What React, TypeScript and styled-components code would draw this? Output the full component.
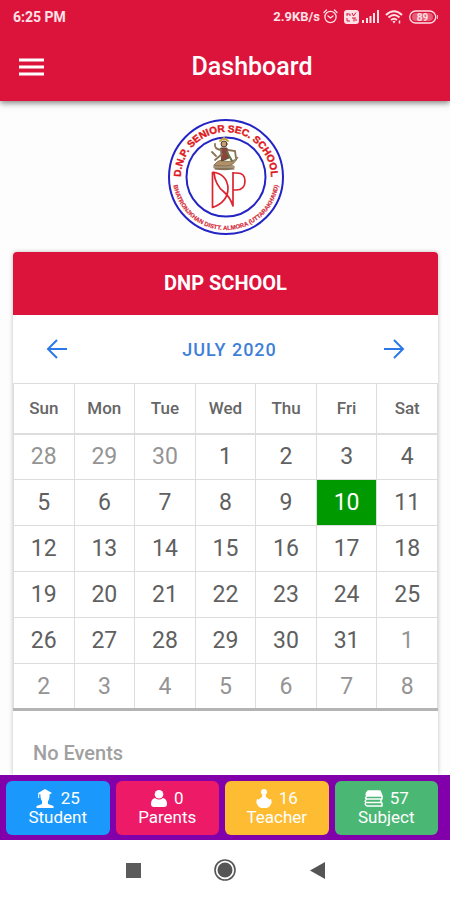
import React from "react";
import styled, { createGlobalStyle } from "styled-components";

const crimson = "#dc143c";

const GlobalStyle = createGlobalStyle`
  * { box-sizing: border-box; }
  body {
    margin: 0;
    background: #fdfdfd;
    font-family: Roboto, "Liberation Sans", sans-serif;
  }
  button { font-family: inherit; border: 0; padding: 0; cursor: pointer; }
`;

const Screen = styled.div`
  display: flex;
  flex-direction: column;
  min-height: 100vh;
`;

const Header = styled.header`
  background: ${crimson};
  color: #fff;
  box-shadow: 0 2px 6px rgba(0, 0, 0, 0.5);
`;

const StatusBar = styled.div`
  display: flex;
  align-items: center;
  justify-content: space-between;
  height: 33px;
  padding: 0 12px 0 13px;
  color: #ffe1e6;
  font-size: 14px;
  font-weight: 700;
`;

const StatusIcons = styled.div`
  display: flex;
  align-items: center;
  gap: 3px;
  font-size: 13px;

  svg { display: block; }
`;

const Toolbar = styled.div`
  display: grid;
  grid-template-columns: 54px 1fr;
  align-items: center;
  height: 68px;
`;

const MenuButton = styled.button`
  display: flex;
  justify-content: flex-end;
  width: 44px;
  height: 44px;
  align-items: center;
  background: none;
  color: #fff;
`;

const Title = styled.h1`
  margin: 0;
  text-align: center;
  font-size: 25px;
  line-height: 32px;
  font-weight: 500;
`;

const Main = styled.main`
  display: flex;
  flex: 1;
  flex-direction: column;
  padding: 17px 12px 0 13px;
`;

const Logo = styled.svg`
  display: block;
  align-self: center;
  width: 118px;
  height: 118px;
  margin-bottom: 16px;
  font-family: "Liberation Sans", sans-serif;
`;

const Card = styled.section`
  display: flex;
  flex: 1;
  flex-direction: column;
  border-radius: 4px 4px 0 0;
  background: #fff;
  box-shadow: 0 0 4px rgba(0, 0, 0, 0.25);
`;

const CardTitle = styled.h2`
  margin: 0;
  border-radius: 4px 4px 0 0;
  background: ${crimson};
  color: #fff;
  text-align: center;
  font-size: 20px;
  line-height: 63px;
  font-weight: 700;
`;

const MonthBar = styled.div`
  display: flex;
  align-items: center;
  justify-content: space-between;
  height: 68px;
  padding: 0 29px;
  color: #3f7fd9;
`;

const ArrowButton = styled.button`
  display: grid;
  place-items: center;
  width: 30px;
  height: 40px;
  background: none;
  color: #2b78e8;
`;

const Month = styled.h3`
  margin: 0;
  padding-left: 8px;
  font-size: 18px;
  font-weight: 500;
  letter-spacing: 1px;
`;

const Calendar = styled.table`
  width: 100%;
  table-layout: fixed;
  border-collapse: collapse;
  border-bottom: 3px solid #b4b4b4;
`;

const DayName = styled.th`
  height: 50px;
  padding: 0;
  border: 1px solid #ddd;
  border-bottom: 2px solid #ddd;
  color: #666;
  font-size: 17px;
  font-weight: 500;
`;

const DayCell = styled.td<{ $outside: boolean; $today: boolean }>`
  height: 46px;
  padding: 0;
  border: 1px solid #ddd;
  background: ${(p) => (p.$today ? "#009900" : "#fff")};
  color: ${(p) => (p.$today ? "#fff" : p.$outside ? "#949494" : "#606060")};
  text-align: center;
  font-size: 23px;
  font-weight: 400;
`;

const Events = styled.p`
  margin: 0;
  padding: 29px 20px 8px;
  color: #a0a0a0;
  font-size: 20px;
  line-height: 26px;
  font-weight: 500;
`;

const Tiles = styled.nav`
  position: relative;
  display: grid;
  grid-template-columns: repeat(4, 1fr);
  gap: 6px;
  padding: 6px 12px 5px 6px;
  background: #8200aa;
`;

const Tile = styled.button<{ $color: string }>`
  display: flex;
  flex-direction: column;
  align-items: center;
  justify-content: center;
  height: 54px;
  border-radius: 6px;
  background: ${(p) => p.$color};
  color: #fff;
  font-size: 17px;
  line-height: 19px;
`;

const TileCount = styled.span`
  display: flex;
  align-items: center;
  gap: 7px;

  svg { display: block; }
`;

const SystemNav = styled.nav`
  display: flex;
  align-items: center;
  justify-content: center;
  gap: 68px;
  height: 60px;
  background: #fff;
`;

const SystemButton = styled.button`
  display: grid;
  place-items: center;
  width: 24px;
  height: 30px;
  background: none;
`;

const weekdays = ["Sun", "Mon", "Tue", "Wed", "Thu", "Fri", "Sat"];
const firstOffset = -3;
const weeks = Array.from({ length: 6 }, (_, w) =>
  Array.from({ length: 7 }, (_, d) => {
    const n = w * 7 + d + 1 + firstOffset;
    if (n < 1) return { day: n + 30, outside: true };
    if (n > 31) return { day: n - 31, outside: true };
    return { day: n, outside: false };
  })
);

const StudentIcon = () => (
  <svg width="18" height="19" viewBox="0 0 18 19" fill="currentColor">
    <path d="M9 0 L16 4 L13.500 5.500 V8 Q13 11 12 12 V15 L17.500 17 V19 H.5 V17 L6 15 V12 Q5 11 4.500 8 V5.500 L3.200 5 V9 H2.200 V4 Z" />
  </svg>
);

const ParentsIcon = () => (
  <svg width="16" height="17" viewBox="0 0 16 17" fill="currentColor">
    <circle cx="8" cy="4.300" r="4.300" />
    <path d="M4 8 Q8 11 12 8 Q16 9 16 14 Q16 17 13 17 H3 Q0 17 0 14 Q0 9 4 8Z" />
  </svg>
);

const TeacherIcon = () => (
  <svg width="16" height="19" viewBox="0 0 16 19" fill="currentColor">
    <circle cx="8" cy="3" r="3" />
    <path d="M6.500 5 H9.500 L10 8 Q12 9 13 10.500 L15 10 Q16 12 15.500 14 Q14 18 11 19 H5 Q2 18 .5 14 Q0 12 1 10 L3 10.500 Q4 9 6 8Z" />
  </svg>
);

const SubjectIcon = () => (
  <svg width="19" height="17" viewBox="0 0 19 17" fill="none" stroke="currentColor" strokeWidth="1.500" strokeLinejoin="round">
    <path d="M4 1 H16 L18 6 H3 Q1 4 4 1Z" fill="currentColor" />
    <path d="M18 6 V9 H3 Q0 8 3 6 M17 9 V12.500 H2 Q0 11 3 9 M18 12.500 V16 H3 Q0 14 2 12.500" />
  </svg>
);

const tiles = [
  { label: "Student", count: 25, color: "#1a98fc", Icon: StudentIcon },
  { label: "Parents", count: 0, color: "#ed1a68", Icon: ParentsIcon },
  { label: "Teacher", count: 16, color: "#fdbc32", Icon: TeacherIcon },
  { label: "Subject", count: 57, color: "#4bb774", Icon: SubjectIcon },
];

const AlarmIcon = () => (
  <svg width="15" height="15" viewBox="0 0 15 15" fill="none" stroke="currentColor" strokeWidth="1.300" strokeLinecap="round">
    <circle cx="7.500" cy="8" r="5.600" />
    <path d="M1 3.500 L3.500 1 M11.500 1 L14 3.500 M5 7 L7.500 9 L10 7" />
  </svg>
);

const VolteIcon = () => (
  <svg width="15" height="14" viewBox="0 0 15 14">
    <rect width="15" height="14" rx="3" fill="currentColor" />
    <path d="M3 3 V6 M3 4 H6 V6 M8 3 L9.500 6 L12 2.500 M3 8 V11 H6 M8 8 H12 M10 8 V11.500 M12 9 V11" fill="none" stroke={crimson} />
  </svg>
);

const SignalIcon = () => (
  <svg width="17" height="13" viewBox="0 0 17 13" fill="currentColor">
    <path d="M0 10h2v3H0zM4 8h2v5H4zM7.500 6h2v7h-2zM11 3h2v10h-2zM15 0h2v13h-2z" />
  </svg>
);

const WifiIcon = () => (
  <svg width="18" height="14" viewBox="0 0 18 14" fill="none" stroke="currentColor" strokeWidth="2">
    <path d="M1 5 Q9 -2.500 17 5 M3.500 7.500 Q9 2.500 14.500 7.500 M6 10 Q9 7.500 12 10" />
    <path d="M7.500 11.500 Q9 10 10.500 11.500 L9 13.500Z" fill="currentColor" stroke="none" />
    <path d="M14.500 10.500 V13.500" strokeWidth="1.500" />
  </svg>
);

const BatteryIcon = () => (
  <svg width="29" height="14" viewBox="0 0 29 14">
    <rect x=".7" y="1" width="26" height="12" rx="6" fill="none" stroke="currentColor" strokeWidth="1.300" />
    <rect x="3" y="3" width="21" height="8" rx="4" fill="currentColor" opacity=".35" />
    <path d="M28.300 5v4" stroke="currentColor" />
    <text x="13.500" y="10.500" textAnchor="middle" fill="currentColor" fontSize="10" fontWeight="700">89</text>
  </svg>
);

const SchoolLogo = () => (
  <Logo viewBox="0 0 118 118" role="img" aria-label="D.N.P. Senior Sec. School">
    <defs>
      <path id="upperArc" d="M59 104 A45 45 0 0 1 59 14 A45 45 0 0 1 59 104" />
      <path id="lowerArc" d="M59 6 A53 53 0 0 0 59 112 A53 53 0 0 0 59 6" />
    </defs>
    <g fill="none" stroke="#2424c4">
      <circle cx="59" cy="59" r="57" fill="#fff" strokeWidth="2" />
      <circle cx="59" cy="59" r="39.500" strokeWidth="2" />
    </g>
    <text fill="#dd1720" stroke="#dd1720" strokeWidth=".4" fontSize="10" fontWeight="700" textAnchor="middle">
      <textPath href="#upperArc" startOffset="50%">D.N.P. SENIOR SEC. SCHOOL</textPath>
    </text>
    <text fill="#d42c3a" stroke="#d42c3a" strokeWidth=".2" fontSize="6" fontWeight="700" textAnchor="middle">
      <textPath href="#lowerArc" startOffset="50%">BHATRONJKHAN DISTT. ALMORA (UTTARAKHAND)</textPath>
    </text>
    <g fill="none" stroke="#8a7354" strokeLinecap="round">
      <ellipse cx="57" cy="49" rx="11" ry="3.300" fill="#a69377" stroke="none" />
      <path d="M48 51 H67" stroke="#67513a" strokeWidth="1" />
      <path d="M47 47 Q53 40 57 43 Q66 45 71 39 Q67 48 59 48 Z" fill="#b29168" strokeWidth="1" />
      <path d="M54 30 L60 30 L62 40 L55 43 Z" fill="#8d443b" stroke="#594a38" />
      <path d="M54 32 Q47 31 48 26 M49 38 L45 34 M61 32 L68 33 L69 40 M55 36 L48 42" strokeWidth="1.800" />
      <path d="M60 34 L65 43" stroke="#637544" strokeWidth="2" />
      <circle cx="57" cy="26" r="3" fill="#c79c70" stroke="#493c2c" />
      <path d="M53 23 L57 20 L61 23" stroke="#c2a03c" strokeWidth="2" />
    </g>
    <g fill="none" stroke="#dc252f" strokeWidth="1.700" strokeLinejoin="round">
      <path d="M45.500 54 V89.500 Q61 84 61 70 Q60 56 45.500 54 M47 54.500 Q48 67 57 74 Q63 79 66 88 V54" />
      <path d="M66 55 H70 Q78 55 78 63 Q78 72 69 72 H66" />
    </g>
  </Logo>
);

const Arrow = ({ forward = false }: { forward?: boolean }) => (
  <svg width="22" height="22" viewBox="0 0 22 22" fill="none" stroke="currentColor" strokeWidth="2">
    <path d={forward ? "M1 11H20 M11 2L20 11L11 20" : "M21 11H2 M11 2L2 11L11 20"} />
  </svg>
);

export default function App() {
  return (
    <Screen>
      <GlobalStyle />
      <Header>
        <StatusBar>
          <span>6:25 PM</span>
          <StatusIcons>
            <span>2.9KB/s</span>
            <AlarmIcon />
            <span />
            <VolteIcon />
            <SignalIcon />
            <span />
            <WifiIcon />
            <span />
            <BatteryIcon />
          </StatusIcons>
        </StatusBar>
        <Toolbar>
          <MenuButton aria-label="Open menu">
            <svg width="25" height="18" viewBox="0 0 25 18" stroke="currentColor" strokeWidth="3">
              <path d="M0 2H25M0 9H25M0 16H25" />
            </svg>
          </MenuButton>
          <Title>Dashboard</Title>
        </Toolbar>
      </Header>
      <Main>
        <SchoolLogo />
        <Card>
          <CardTitle>DNP SCHOOL</CardTitle>
          <MonthBar>
            <ArrowButton aria-label="Previous month"><Arrow /></ArrowButton>
            <Month>JULY 2020</Month>
            <ArrowButton aria-label="Next month"><Arrow forward /></ArrowButton>
          </MonthBar>
          <Calendar>
            <thead>
              <tr>
                {weekdays.map((name) => <DayName key={name} scope="col">{name}</DayName>)}
              </tr>
            </thead>
            <tbody>
              {weeks.map((week, w) => (
                <tr key={w}>
                  {week.map(({ day, outside }) => (
                    <DayCell key={day} $outside={outside} $today={!outside && day === 10}>{day}</DayCell>
                  ))}
                </tr>
              ))}
            </tbody>
          </Calendar>
          <Events>No Events</Events>
        </Card>
      </Main>
      <Tiles>
        {tiles.map(({ label, count, color, Icon }) => (
          <Tile key={label} $color={color}>
            <TileCount><Icon />{count}</TileCount>
            <span>{label}</span>
          </Tile>
        ))}
      </Tiles>
      <SystemNav>
        <SystemButton aria-label="Recent apps">
          <svg width="15" height="15"><rect width="15" height="15" fill="#5b5b5b" /></svg>
        </SystemButton>
        <SystemButton aria-label="Home">
          <svg width="24" height="24" viewBox="0 0 24 24">
            <circle cx="12" cy="12" r="10" fill="none" stroke="#555" strokeWidth="1.600" />
            <circle cx="12" cy="12" r="7.500" fill="#555" />
          </svg>
        </SystemButton>
        <SystemButton aria-label="Back">
          <svg width="15" height="17" viewBox="0 0 15 17"><path d="M15 0V17L0 8.500Z" fill="#555" /></svg>
        </SystemButton>
      </SystemNav>
    </Screen>
  );
}
